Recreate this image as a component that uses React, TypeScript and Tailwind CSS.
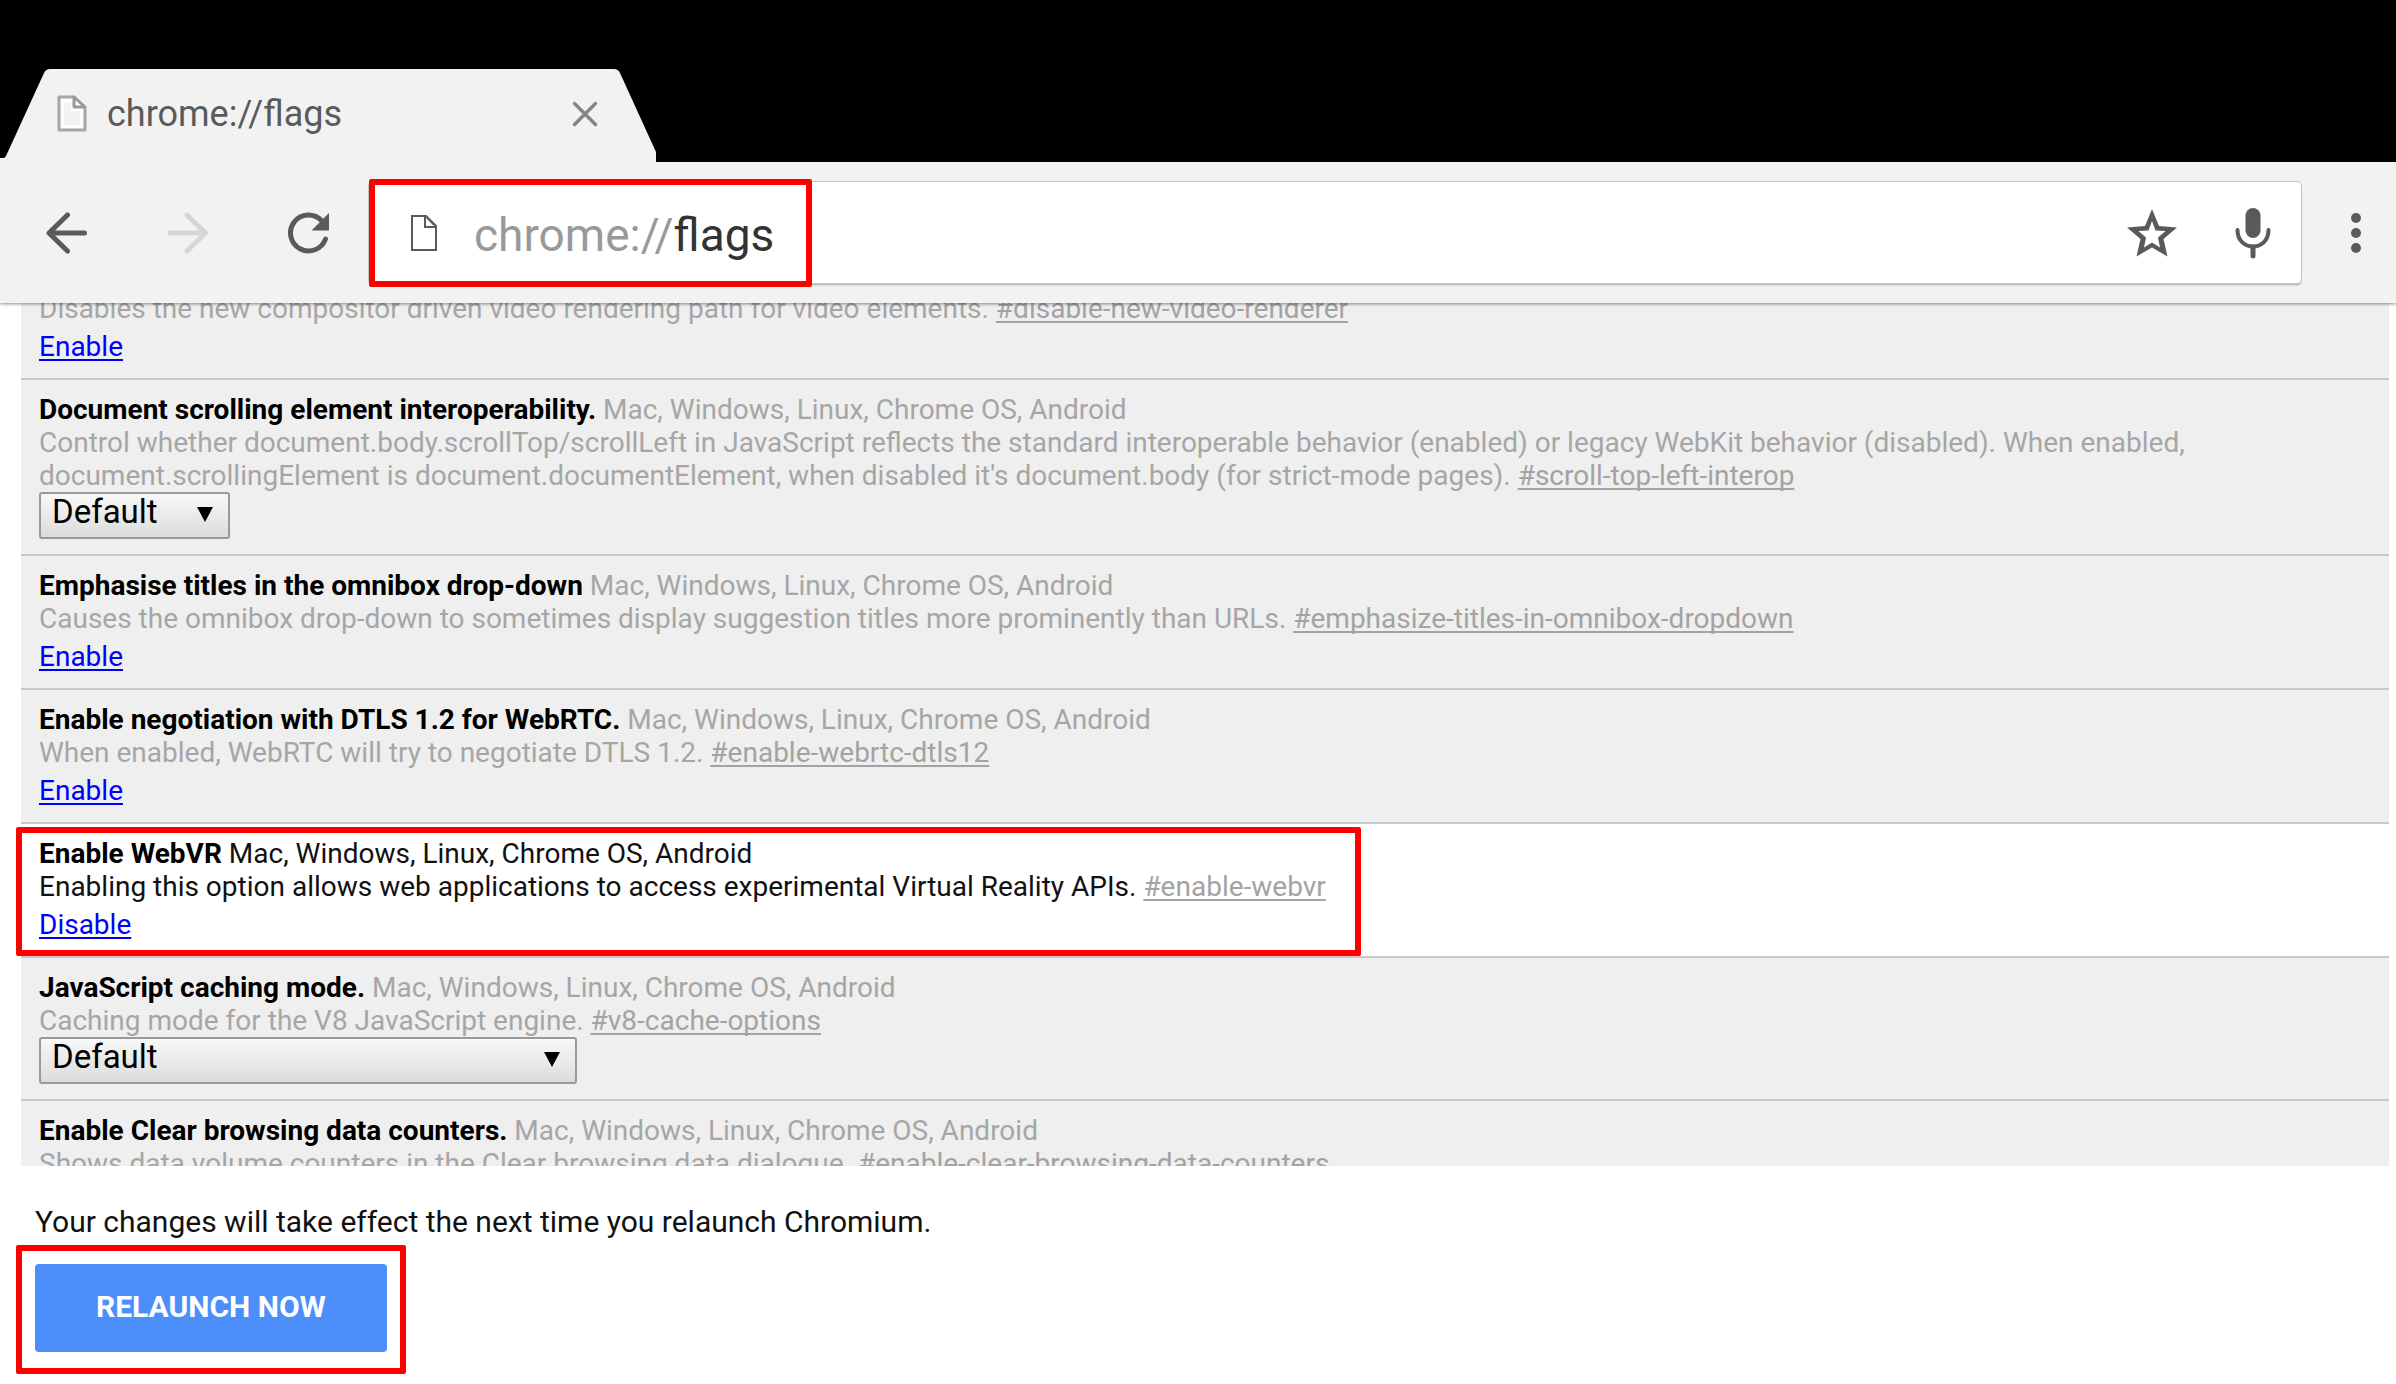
import React from "react";

type Flag = {
  title?: string;
  description: string;
  anchor: string;
  action?: string;
  select?: "narrow" | "wide";
  active?: boolean;
};

const PLATFORMS = "Mac, Windows, Linux, Chrome OS, Android";

const FLAGS: Flag[] = [
  {
    description: "Disables the new compositor driven video rendering path for video elements.",
    anchor: "#disable-new-video-renderer",
    action: "Enable",
  },
  {
    title: "Document scrolling element interoperability.",
    description:
      "Control whether document.body.scrollTop/scrollLeft in JavaScript reflects the standard interoperable behavior (enabled) or legacy WebKit behavior (disabled). When enabled, document.scrollingElement is document.documentElement, when disabled it's document.body (for strict-mode pages).",
    anchor: "#scroll-top-left-interop",
    select: "narrow",
  },
  {
    title: "Emphasise titles in the omnibox drop-down",
    description:
      "Causes the omnibox drop-down to sometimes display suggestion titles more prominently than URLs.",
    anchor: "#emphasize-titles-in-omnibox-dropdown",
    action: "Enable",
  },
  {
    title: "Enable negotiation with DTLS 1.2 for WebRTC.",
    description: "When enabled, WebRTC will try to negotiate DTLS 1.2.",
    anchor: "#enable-webrtc-dtls12",
    action: "Enable",
  },
  {
    title: "Enable WebVR",
    description: "Enabling this option allows web applications to access experimental Virtual Reality APIs.",
    anchor: "#enable-webvr",
    action: "Disable",
    active: true,
  },
  {
    title: "JavaScript caching mode.",
    description: "Caching mode for the V8 JavaScript engine.",
    anchor: "#v8-cache-options",
    select: "wide",
  },
  {
    title: "Enable Clear browsing data counters.",
    description: "Shows data volume counters in the Clear browsing data dialogue.",
    anchor: "#enable-clear-browsing-data-counters",
  },
];

function Highlight({ className }: { className: string }) {
  return (
    <div
      aria-hidden="true"
      className={`pointer-events-none absolute z-20 rounded-[2px] border-6 border-[#ff0000] ${className}`}
    />
  );
}

function FlagSelect({ kind, label }: { kind: "narrow" | "wide"; label: string }) {
  return (
    <div className={`relative h-[47px] ${kind === "narrow" ? "w-[191px]" : "w-[538px]"}`}>
      <select
        aria-label={label}
        defaultValue="Default"
        className="block h-full w-full appearance-none rounded-[3px] border-2 border-[#999] bg-linear-to-b from-[#f8f8f8] to-[#dcdcdc] pb-2 pl-[11px] text-[33px] leading-[36px] text-black"
      >
        <option>Default</option>
      </select>
      <svg
        aria-hidden="true"
        viewBox="0 0 16 15"
        className="pointer-events-none absolute top-[15px] right-[17px] h-[15px] w-4"
      >
        <path d="M0 0H16L8 15Z" fill="#000" />
      </svg>
    </div>
  );
}

function FlagRow({ flag }: { flag: Flag }) {
  return (
    <li
      className={`relative border-b-2 border-[#c9c9c9] px-[18px] text-[28px] leading-[33px] ${
        flag.active ? "bg-white text-[#111]" : "bg-[#efefef] text-[#a6a6a6]"
      } ${flag.title ? "pt-[13px]" : ""} ${flag.action ? "pb-[10px]" : "pb-[15px]"}`}
    >
      {flag.title && (
        <h3>
          <span className="font-bold text-black">{flag.title}</span> {PLATFORMS}
        </h3>
      )}
      <p>
        {flag.description}{" "}
        <a
          href={flag.anchor}
          className="text-[#a3a3a3] underline decoration-2 underline-offset-[3px] [text-decoration-skip-ink:none]"
        >
          {flag.anchor}
        </a>
      </p>
      {flag.select && <FlagSelect kind={flag.select} label={flag.title ?? flag.anchor} />}
      {flag.action && (
        <div className="h-[43px] leading-[43px]">
          <a
            href="#toggle"
            className="text-[#0000ff] underline decoration-2 underline-offset-[3px] [text-decoration-skip-ink:none]"
          >
            {flag.action}
          </a>
        </div>
      )}
      {flag.active && <Highlight className="top-[3px] -left-[5px] h-[129px] w-[1345px]" />}
    </li>
  );
}

function TabStrip() {
  return (
    <div className="bg-black pt-[69px]">
      <div className="relative flex h-[93px] w-[657px] items-center pb-1 pl-[57px]">
        <svg
          aria-hidden="true"
          viewBox="0 0 657 93"
          preserveAspectRatio="none"
          className="absolute inset-0 h-full w-full"
        >
          <path
            d="M0 93V89H3Q5 89 6 87L44 4Q46 0 50 0H614Q618 0 620 4L656 83V93Z"
            fill="#f2f2f2"
          />
        </svg>
        <svg aria-hidden="true" viewBox="0 0 30 37" className="relative h-[37px] w-[30px]" fill="none">
          <path d="M2 2H17L28 13V35H2Z" fill="#fff" stroke="#a6a6a6" strokeWidth="3" strokeLinejoin="round" />
          <path d="M7 7H14V16H23V30H7Z" fill="#f2f2f2" />
          <path d="M17 2V12H28Z" fill="#fff" stroke="#999" strokeWidth="3" strokeLinejoin="round" />
        </svg>
        <span className="relative ml-5 text-[36px] leading-[42px] text-[#5a5a5a]">chrome://flags</span>
        <button type="button" aria-label="Close tab" className="relative mr-[58px] ml-auto">
          <svg viewBox="0 0 28 28" className="h-7 w-7" fill="none" stroke="#858585" strokeWidth="3.4" strokeLinecap="round">
            <path d="M3.500 3.500L24.500 24.500M24.500 3.500L3.500 24.500" />
          </svg>
        </button>
      </div>
    </div>
  );
}

function Toolbar() {
  return (
    <div className="flex h-[141px] items-center bg-[#f2f2f2] pl-[6px]">
      <button type="button" aria-label="Back" className="flex w-[121px] shrink-0 justify-center">
        <svg viewBox="0 0 42 42" className="h-[42px] w-[42px]" fill="none" stroke="#5a5a5a" strokeWidth="5" strokeLinecap="round" strokeLinejoin="round">
          <path d="M21.500 3L3 21L21.500 39M4 21H38.500" />
        </svg>
      </button>
      <button type="button" aria-label="Forward" disabled className="flex w-[121px] shrink-0 justify-center">
        <svg viewBox="0 0 42 42" className="h-[42px] w-[42px]" fill="none" stroke="#d6d6d6" strokeWidth="5" strokeLinecap="round" strokeLinejoin="round">
          <path d="M20 3L38.500 21L20 39M38 21H3" />
        </svg>
      </button>
      <button type="button" aria-label="Reload" className="flex w-[121px] shrink-0 justify-center">
        <svg viewBox="0 0 42 42" className="h-[42px] w-[42px]" fill="none">
          <path d="M37.500 27A18 18 0 1 1 33.500 8.500" stroke="#5a5a5a" strokeWidth="5" strokeLinecap="round" />
          <path d="M41 1V18.500H23.500Z" fill="#5a5a5a" />
        </svg>
      </button>
      <div className="relative mr-[15px] flex h-[101px] min-w-0 flex-1 items-center rounded-[4px] bg-white pl-[42px] shadow-[0_0_0_1px_#c4c4c4,0_2px_2px_rgba(0,0,0,0.3)]">
        <svg aria-hidden="true" viewBox="0 0 26 36" className="h-9 w-[26px] shrink-0" fill="none" stroke="#5a5a5a" strokeWidth="2">
          <path d="M1 1H15L25 11V35H1Z" />
          <path d="M14 1V12H25" />
          <path d="M16 3L23 10" strokeWidth="1.500" />
        </svg>
        <label htmlFor="address" className="ml-[37px] pt-1 text-[46px] leading-[54px] text-[#999]">
          chrome://
        </label>
        <input
          id="address"
          type="text"
          defaultValue="flags"
          className="h-[58px] min-w-0 flex-1 bg-transparent pt-1 text-[46px] leading-[54px] text-[#333] outline-none"
        />
        <button type="button" aria-label="Bookmark" className="shrink-0">
          <svg viewBox="0 0 50 48" className="h-12 w-[50px]" fill="none">
            <path
              fillRule="evenodd"
              clipRule="evenodd"
              d="M25 0L32 17L50 18.500L36.500 30L40.500 47.500L25 38.500L9.500 47.500L13.500 30L0 18.500L18 17ZM25 12L21.500 21.500L11.500 22L19 28.500L17 38.500L25 33.500L33 38.500L31 28.500L38.500 22L28.500 21.500Z"
              fill="#5a5a5a"
            />
          </svg>
        </button>
        <button type="button" aria-label="Voice search" className="mr-[30px] ml-[58px] shrink-0">
          <svg viewBox="0 0 36 52" className="h-[52px] w-9" fill="none">
            <rect x="10.500" y="1" width="15" height="30" rx="7.500" fill="#5a5a5a" />
            <path d="M2.500 23C2.500 45 33.500 45 33.500 23" stroke="#5a5a5a" strokeWidth="4" strokeLinecap="round" />
            <path d="M18 40V49" stroke="#5a5a5a" strokeWidth="5" strokeLinecap="round" />
          </svg>
        </button>
        <Highlight className="-top-[3px] left-0 h-[108px] w-[443px]" />
      </div>
      <button type="button" aria-label="Menu" className="flex w-20 shrink-0 justify-center">
        <svg viewBox="0 0 10 42" className="h-[42px] w-[10px]" fill="#5a5a5a">
          <circle cx="5" cy="6" r="5" />
          <circle cx="5" cy="21" r="5" />
          <circle cx="5" cy="36" r="5" />
        </svg>
      </button>
    </div>
  );
}

export default function App() {
  return (
    <div className="flex h-screen flex-col overflow-hidden bg-white font-[Roboto,sans-serif]">
      <header className="relative z-10 shrink-0 shadow-[0_1px_3px_rgba(0,0,0,0.45)]">
        <TabStrip />
        <Toolbar />
      </header>
      <main className="min-h-0 flex-1 overflow-hidden pr-[7px] pl-[21px]">
        <ul className="-mt-[11px]">
          {FLAGS.map((flag) => (
            <FlagRow key={flag.anchor} flag={flag} />
          ))}
        </ul>
      </main>
      <footer className="shrink-0 px-[35px] pt-[38px] pb-8">
        <p className="text-[30px] leading-[35px] text-[#111]">
          Your changes will take effect the next time you relaunch Chromium.
        </p>
        <div className="relative mt-[25px] w-fit">
          <button
            type="button"
            className="h-[88px] rounded-[4px] bg-[#4c8ffb] px-[61px] pb-1 text-[30px] leading-[35px] font-bold text-white"
          >
            RELAUNCH NOW
          </button>
          <Highlight className="-inset-x-[19px] -top-[19px] -bottom-[22px]" />
        </div>
      </footer>
    </div>
  );
}
